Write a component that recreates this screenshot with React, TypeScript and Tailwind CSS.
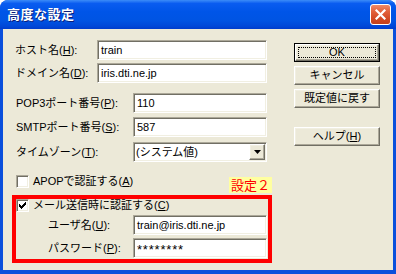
import React from "react";

const sunken =
  "border border-t-[#aca899] border-l-[#aca899] border-b-white border-r-white shadow-[inset_1px_1px_0_#716f64,inset_-1px_-1px_0_#f1efe2]";
const raised =
  "border border-t-white border-l-white border-b-[#716f64] border-r-[#716f64] shadow-[inset_-1px_-1px_0_#aca899,inset_1px_1px_0_#f1efe2]";

function U({ children }: { children: React.ReactNode }) {
  return <span className="underline underline-offset-[1px]">{children}</span>;
}

function Input({ value, w, extra }: { value: string; w: string; extra?: string }) {
  return (
    <div className={`${sunken} ${w} ${extra ?? "text-[11px]"} bg-white h-[20px] flex items-center pl-[3px] text-black whitespace-nowrap overflow-hidden`}>
      {value}
    </div>
  );
}

function Check({ checked }: { checked?: boolean }) {
  const tops = [2, 3, 4, 3, 2, 1, 0];
  return (
    <div className={`${sunken} bg-white w-[13px] h-[13px] shrink-0 flex items-center justify-center`}>
      {checked && (
        <svg width="7" height="7" viewBox="0 0 7 7" shapeRendering="crispEdges">
          {tops.map((t, i) => (
            <rect key={i} x={i} y={t} width="1" height="3" fill="#000" />
          ))}
        </svg>
      )}
    </div>
  );
}

function Btn({ children, def }: { children: React.ReactNode; def?: boolean }) {
  if (def) {
    return (
      <div className="w-[86px] h-[19px] border border-black">
        <div className={`${raised} w-full h-full bg-[#ece9d8] p-[2px]`}>
          <div className="w-full h-full border border-dotted border-black flex items-center justify-center text-[11px] text-black leading-none">
            {children}
          </div>
        </div>
      </div>
    );
  }
  return (
    <div className={`${raised} w-[86px] h-[19px] bg-[#ece9d8] flex items-center justify-center text-[11px] text-black leading-none`}>
      {children}
    </div>
  );
}

export default function App() {
  return (
    <div className="w-[396px] h-[274px] bg-white">
      <div className="w-[396px] h-[274px] flex flex-col rounded-t-[8px] overflow-hidden bg-[#0a4fdc] [font-family:'Liberation_Sans','Noto_Sans_CJK_JP',sans-serif] text-black">
        {/* Title bar */}
        <div className="h-[29px] shrink-0 flex items-center justify-between pl-[7px] pr-[5px] bg-[linear-gradient(180deg,#3c8cf8_0%,#0a5cf0_12%,#0055e8_40%,#0054e3_70%,#0048d8_90%,#003ccb_100%)]">
          <span className="text-white font-bold text-[13px] tracking-[0.5px] [text-shadow:1px_1px_0_#0a1e7a]">
            高度な設定
          </span>
          <div className="w-[21px] h-[21px] rounded-[3px] border border-white bg-[linear-gradient(180deg,#f08a68_0%,#e2603a_35%,#d34a24_70%,#c2401c_100%)] flex items-center justify-center">
            <svg width="11" height="11" viewBox="0 0 11 11">
              <path d="M1.5 1.5 L9.5 9.5 M9.5 1.5 L1.5 9.5" stroke="#fff" strokeWidth="2.2" strokeLinecap="square" />
            </svg>
          </div>
        </div>

        {/* Body */}
        <div className="flex-1 mx-[3px] mb-[4px] bg-[#ece9d8] flex text-[11px]">
          {/* Left column */}
          <div className="w-[269px] pl-[9px] pt-[11px] flex flex-col">
            <div className="flex items-center h-[20px]">
              <span className="w-[85px] pl-[3px] shrink-0">ホスト名(<U>H</U>):</span>
              <Input value="train" w="w-[170px]" />
            </div>
            <div className="flex items-center h-[20px] mt-[3px]">
              <span className="w-[85px] pl-[3px] shrink-0">ドメイン名(<U>D</U>):</span>
              <Input value="iris.dti.ne.jp" w="w-[170px]" />
            </div>
            <div className="flex items-center h-[20px] mt-[10px]">
              <span className="w-[121px] pl-[4px] shrink-0">POP3ポート番号(<U>P</U>):</span>
              <Input value="110" w="w-[134px]" />
            </div>
            <div className="flex items-center h-[20px] mt-[4px]">
              <span className="w-[121px] pl-[4px] shrink-0">SMTPポート番号(<U>S</U>):</span>
              <Input value="587" w="w-[134px]" />
            </div>
            <div className="flex items-center h-[20px] mt-[5px]">
              <span className="w-[121px] pl-[4px] shrink-0">タイムゾーン(<U>T</U>):</span>
              <div className={`${sunken} w-[134px] h-[20px] bg-white flex items-center`}>
                <span className="flex-1 pl-[2px]">(システム値)</span>
                <div className={`${raised} w-[16px] h-[16px] mr-[1px] bg-[#ece9d8] flex items-center justify-center`}>
                  <svg width="7" height="4" viewBox="0 0 7 4">
                    <path d="M0 0 H7 L3.5 4 Z" fill="#000" />
                  </svg>
                </div>
              </div>
            </div>

            <div className="flex justify-between h-[18px] mt-[13px]">
              <div className="flex items-center h-[13px] pl-[4px] gap-[4px]">
                <Check />
                <span>APOPで認証する(<U>A</U>)</span>
              </div>
              <div className="self-end h-[16px] px-[2px] bg-[#ffffa0] text-[#ff0000] text-[13px] leading-[16px] [font-family:'Noto_Sans_CJK_JP',sans-serif]">
                設定２
              </div>
            </div>

            <div className="mt-[2px] h-[68px] border-4 border-[#ff0000] flex flex-col">
              <div className="flex items-center h-[13px] gap-[4px]">
                <Check checked />
                <span>メール送信時に認証する(<U>C</U>)</span>
              </div>
              <div className="flex items-center h-[20px] mt-[3px]">
                <span className="w-[117px] pl-[32px] shrink-0">ユーザ名(<U>U</U>):</span>
                <Input value="train@iris.dti.ne.jp" w="w-[134px]" />
              </div>
              <div className="flex items-center h-[20px] mt-[3px]">
                <span className="w-[117px] pl-[32px] shrink-0">パスワード(<U>P</U>):</span>
                <Input value="********" w="w-[134px]" extra="text-[13px] tracking-[0.8px] pt-[3px]" />
              </div>
            </div>
          </div>

          {/* Right column: buttons */}
          <div className="ml-[22px] pt-[14px] flex flex-col">
            <Btn def>OK</Btn>
            <div className="mt-[4px]">
              <Btn>キャンセル</Btn>
            </div>
            <div className="mt-[4px]">
              <Btn>既定値に戻す</Btn>
            </div>
            <div className="mt-[19px]">
              <Btn>
                ヘルプ(<U>H</U>)
              </Btn>
            </div>
          </div>
        </div>
      </div>
    </div>
  );
}
